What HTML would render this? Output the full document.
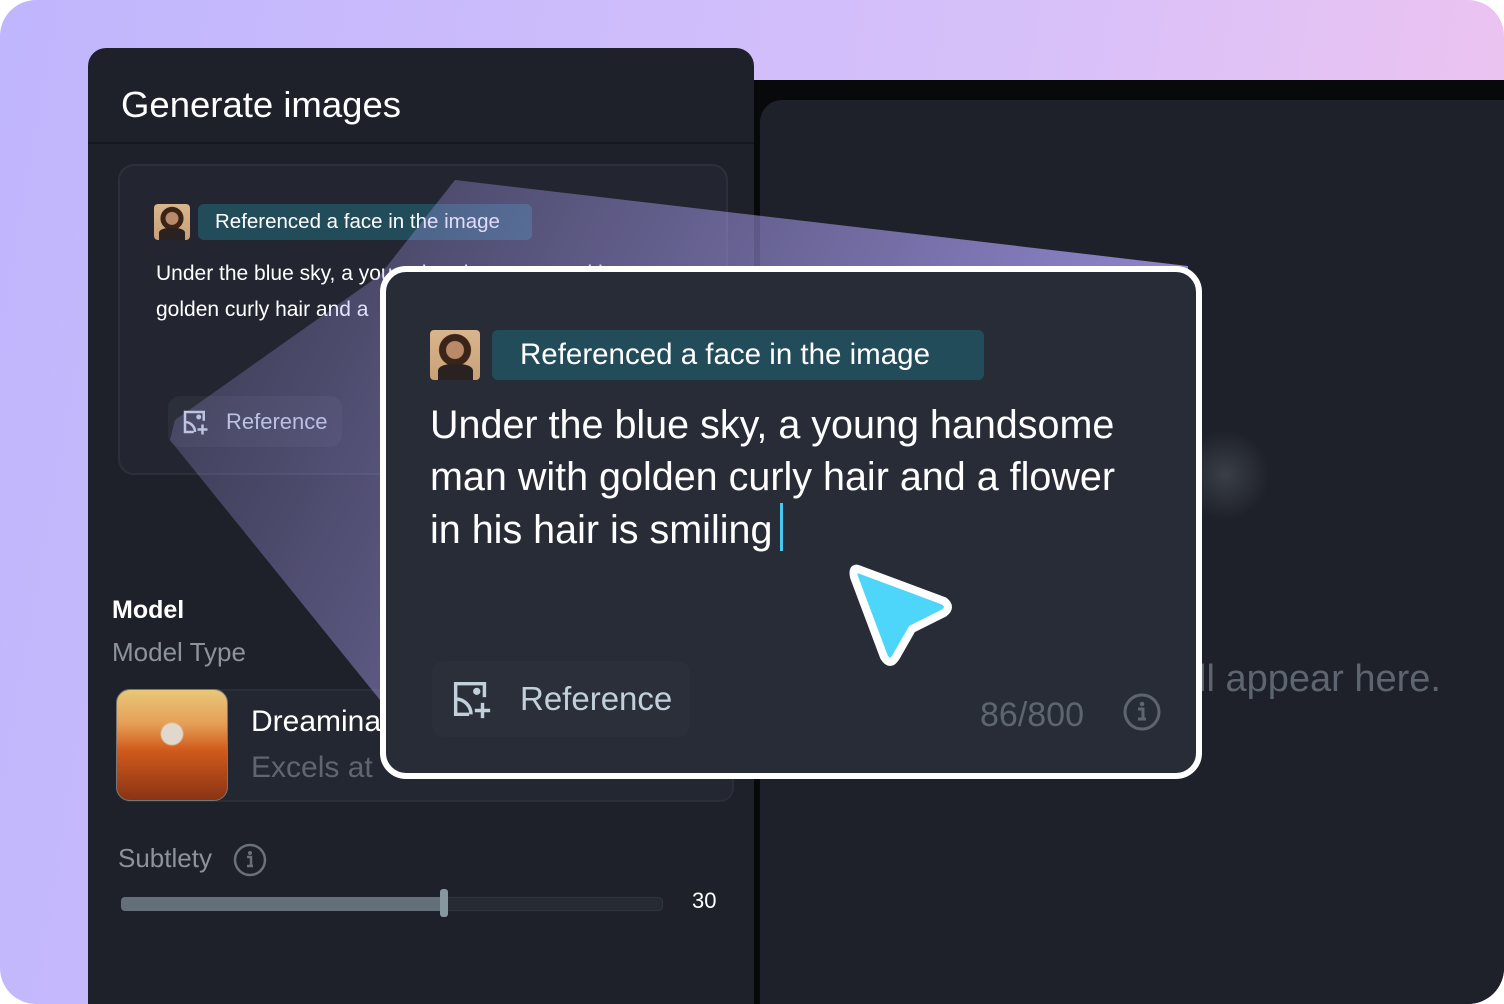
<!DOCTYPE html>
<html><head><meta charset="utf-8"><style>
*{margin:0;padding:0;box-sizing:border-box}
html,body{width:1504px;height:1004px;overflow:hidden;background:#fff;font-family:"Liberation Sans",sans-serif}
#bg{position:absolute;left:0;top:0;width:1504px;height:1004px;border-radius:36px;background:linear-gradient(100deg,#c0b6fd 0%,#d6c0fa 60%,#f2c4ee 100%);overflow:hidden}
.left{position:absolute;left:88px;top:48px;width:666px;height:980px;background:#1e2129;border-radius:18px 18px 0 0}
.title{position:absolute;left:33px;top:36px;font-size:36.5px;color:#fff}
.hline{position:absolute;left:0;top:94px;width:666px;height:2px;background:#151820}
.blk{position:absolute;left:754px;top:80px;width:760px;height:930px;background:#08090b}
.rp{position:absolute;left:760px;top:100px;width:760px;height:910px;background:#1e2129;border-radius:22px 0 0 0}
.card{position:absolute;left:118px;top:164px;width:610px;height:311px;border:2px solid #2c303a;border-radius:16px;background:#232630}
.face{position:absolute;border-radius:4px;background:radial-gradient(circle at 50% 40%,#b98a6a 0 22%,#3a2418 24% 40%,transparent 42%),linear-gradient(#d9b58d,#c9a178);overflow:hidden}
.face:after{content:"";position:absolute;left:15%;bottom:0;width:70%;height:32%;background:#2a2220;border-radius:40% 40% 0 0}
.tag{position:absolute;background:#234c5a;color:#fff;border-radius:6px}
.ref{position:absolute;background:#2b2f3a;border-radius:12px;color:#c2d0dc;display:flex;align-items:center}
.big{position:absolute;left:380px;top:266px;width:822px;height:513px;border:6px solid #fff;border-radius:26px;background:#282c37}
.gray{color:#8d939c}
</style></head><body>
<div id="bg">
<div class="blk"></div>
<div class="rp">
 <div style="position:absolute;left:438px;top:558px;font-size:38px;color:#5d6670;white-space:nowrap">ll appear here.</div>
 <div style="position:absolute;left:420px;top:330px;width:90px;height:90px;border-radius:50%;background:radial-gradient(circle,#3a3f48 0,transparent 70%)"></div>
</div>
<div class="left">
 <div class="title">Generate images</div>
 <div class="hline"></div>
 <div style="position:absolute;left:24px;top:548px;font-size:25px;color:#fff;font-weight:bold">Model</div>
 <div style="position:absolute;left:24px;top:589px;font-size:26px" class="gray">Model Type</div>
 <div style="position:absolute;left:28px;top:641px;width:618px;height:113px;border:2px solid #2a2e37;border-radius:14px;background:#232731"></div>
 <div style="position:absolute;left:28px;top:641px;width:112px;height:112px;border-radius:14px;background:radial-gradient(circle at 50% 40%,#e0d8cc 0 12%,transparent 14%),linear-gradient(#e8c77a 0,#e5a057 30%,#d05a1c 55%,#8a3314 100%);border:1px solid #777"></div>
 <div style="position:absolute;left:163px;top:657px;font-size:30px;color:#fff">Dreamina</div>
 <div style="position:absolute;left:163px;top:703px;font-size:30px;color:#5f6670">Excels at</div>
 <div style="position:absolute;left:30px;top:795px;font-size:26px" class="gray">Subtlety</div>
 <svg style="position:absolute;left:145px;top:795px" width="34" height="34" viewBox="0 0 34 34"><circle cx="17" cy="17" r="15" fill="none" stroke="#6a717a" stroke-width="2.5"/><circle cx="17" cy="10" r="2" fill="#6a717a"/><path d="M14 14h4v9M14 23h6" stroke="#6a717a" stroke-width="2.5" fill="none"/></svg>
 <div style="position:absolute;left:33px;top:849px;width:542px;height:14px;border-radius:4px;background:#252a33;border:1px solid #2f343d"></div>
 <div style="position:absolute;left:33px;top:849px;width:323px;height:14px;border-radius:4px;background:#637079"></div>
 <div style="position:absolute;left:352px;top:841px;width:8px;height:28px;border-radius:3px;background:#8896a0"></div>
 <div style="position:absolute;left:604px;top:840px;font-size:22px;color:#fff">30</div>
</div>
<div class="card">
 <div class="face" style="left:34px;top:38px;width:36px;height:36px"></div>
 <div class="tag" style="left:78px;top:38px;width:334px;height:36px;font-size:20.5px;line-height:36px;padding-left:17px">Referenced a face in the image</div>
 <div style="position:absolute;left:36px;top:90px;font-size:21px;line-height:36px;color:#fff;white-space:nowrap">Under the blue sky, a young handsome man with<br>golden curly hair and a</div>
 <div class="ref" style="left:48px;top:230px;width:174px;height:51px;font-size:22px"><svg style="margin:0 16px 0 12px" width="30" height="30" viewBox="0 0 24 24" fill="none" stroke="#c2d0dc" stroke-width="2"><path d="M19 11V4H4v16h7"/><path d="M4 12a8 8 0 0 1 8 8"/><circle cx="15" cy="8" r="1" fill="#c2d0dc"/><path d="M18 14v8M14 18h8"/></svg>Reference</div>
</div>
<svg style="position:absolute;left:0;top:0" width="1504" height="1004"><defs><linearGradient id="g" x1="0" y1="0" x2="1" y2="0.3"><stop offset="0" stop-color="#a89cf0" stop-opacity="0.15"/><stop offset="1" stop-color="#a89cf0" stop-opacity="0.85"/></linearGradient></defs>
<polygon points="455,180 1188,266 1188,770 380,700 170,440 175,420 380,275" fill="url(#g)"/></svg>
<div class="big">
 <div class="face" style="left:44px;top:58px;width:50px;height:50px"></div>
 <div class="tag" style="left:106px;top:58px;width:492px;height:50px;font-size:29.5px;line-height:50px;padding-left:28px">Referenced a face in the image</div>
 <div style="position:absolute;left:44px;top:127px;font-size:39.5px;line-height:52px;color:#fff;white-space:nowrap">Under the blue sky, a young handsome<br>man with golden curly hair and a flower<br>in his hair is smiling<span style="display:inline-block;width:3px;height:48px;background:#48c8ee;vertical-align:-8px;margin-left:8px"></span></div>
 <div class="ref" style="left:46px;top:389px;width:258px;height:76px;font-size:33px"><svg style="margin:0 26px 0 16px" width="46" height="46" viewBox="0 0 24 24" fill="none" stroke="#c2d0dc" stroke-width="1.8"><path d="M19 11V4H4v16h7"/><path d="M4 12a8 8 0 0 1 8 8"/><circle cx="15" cy="8" r="1" fill="#c2d0dc"/><path d="M18 14v8M14 18h8"/></svg>Reference</div>
 <div style="position:absolute;left:594px;top:424px;font-size:34px;color:#5d6670">86/800</div>
 <svg style="position:absolute;left:736px;top:420px" width="40" height="40" viewBox="0 0 40 40"><circle cx="20" cy="20" r="17" fill="none" stroke="#5d6670" stroke-width="3"/><circle cx="20" cy="12" r="2.3" fill="#5d6670"/><path d="M16 17h5v10M16 27h8" stroke="#5d6670" stroke-width="3" fill="none"/></svg>
</div>
<svg style="position:absolute;left:840px;top:555px" width="125" height="120" viewBox="0 0 125 120"><path d="M18 14 L104 46 Q112 52 104 58 L72 74 L56 102 Q50 112 44 102 L14 22 Q12 12 18 14 Z" fill="#4dd6fa" stroke="#fff" stroke-width="8" stroke-linejoin="round"/></svg>
</div>
</body></html>
